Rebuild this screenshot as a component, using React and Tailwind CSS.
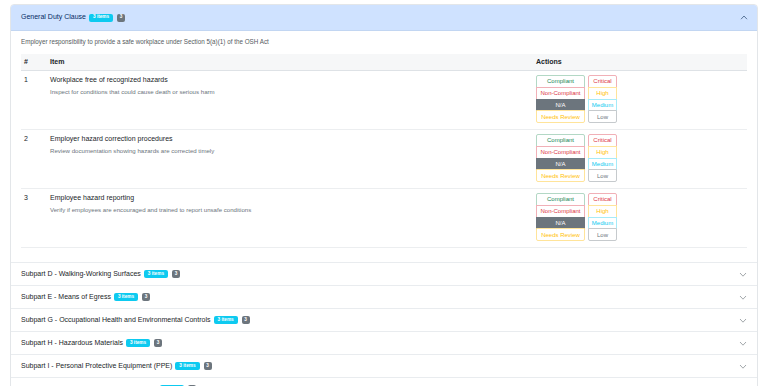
import React from 'react';

const items = [
  {
    n: 1,
    title: 'Workplace free of recognized hazards',
    desc: 'Inspect for conditions that could cause death or serious harm',
  },
  {
    n: 2,
    title: 'Employer hazard correction procedures',
    desc: 'Review documentation showing hazards are corrected timely',
  },
  {
    n: 3,
    title: 'Employee hazard reporting',
    desc: 'Verify if employees are encouraged and trained to report unsafe conditions',
  },
];

const sections = [
  'Subpart D - Walking-Working Surfaces',
  'Subpart E - Means of Egress',
  'Subpart G - Occupational Health and Environmental Controls',
  'Subpart H - Hazardous Materials',
  'Subpart I - Personal Protective Equipment (PPE)',
  'Subpart J - General Environmental Controls',
];

const status = [
  { label: 'Compliant', cls: 'text-[#198754] border-[#b3d8c5] bg-white' },
  { label: 'Non-Compliant', cls: 'text-[#dc3545] border-[#f1b0b7] bg-white' },
  { label: 'N/A', cls: 'text-white border-[#6c757d] bg-[#6c757d]' },
  { label: 'Needs Review', cls: 'text-[#ffc107] border-[#ffe49a] bg-white' },
];

const severity = [
  { label: 'Critical', cls: 'text-[#dc3545] border-[#f1b0b7] bg-white' },
  { label: 'High', cls: 'text-[#ffc107] border-[#ffe49a] bg-white' },
  { label: 'Medium', cls: 'text-[#0dcaf0] border-[#a6ebf9] bg-white' },
  { label: 'Low', cls: 'text-[#6c757d] border-[#c6cacd] bg-white' },
];

function Badges() {
  return (
    <span className="flex items-center gap-[4px] ml-[3px]">
      <span className="h-[8px] px-[4px] rounded-[2px] bg-[#0dcaf0] text-white text-[4.7px] font-bold flex items-center leading-none">
        3 items
      </span>
      <span className="h-[8px] w-[8px] rounded-[2px] bg-[#6c757d] text-white text-[4.7px] font-bold flex items-center justify-center leading-none">
        3
      </span>
    </span>
  );
}

function Chevron({ up }) {
  return (
    <svg width="8" height="5" viewBox="0 0 8 5" fill="none">
      <path
        d={up ? 'M1 4.2 L4 1 L7 4.2' : 'M1 1 L4 4.2 L7 1'}
        stroke={up ? '#3d5a80' : '#8a9096'}
        strokeWidth="0.8"
      />
    </svg>
  );
}

function ButtonGroup({ options, width }) {
  return (
    <div className={`flex flex-col ${width}`}>
      {options.map((o, i) => (
        <div
          key={o.label}
          className={`h-[12.75px] border flex items-center justify-center text-[6px] leading-none ${o.cls} ${
            i > 0 ? '-mt-px' : ''
          } ${i === 0 ? 'rounded-t-[2px]' : ''} ${i === options.length - 1 ? 'rounded-b-[2px]' : ''}`}
        >
          {o.label}
        </div>
      ))}
    </div>
  );
}

export default function App() {
  return (
    <div className="min-h-screen bg-white pt-[4px] pl-[10px] pr-[10px] font-['Liberation_Sans',Arial,sans-serif] text-[#212529]">
      <div className="border border-[#e3e6e9] rounded-t-[4px] overflow-hidden">
        <div className="h-[26px] bg-[#cfe2ff] text-[#052c65] px-[10px] flex items-center justify-between text-[7px] border-b border-[#c2d6f2]">
          <div className="flex items-center">
            <span>General Duty Clause</span>
            <Badges />
          </div>
          <span className="mr-[-1px]">
            <Chevron up />
          </span>
        </div>

        <div className="px-[10px] pt-[6px] pb-[14px]">
          <p className="text-[6.3px] leading-[9px] text-[#555b61]">
            Employer responsibility to provide a safe workplace under Section 5(a)(1) of the OSH Act
          </p>
          <div className="mt-[8px]">
            <div className="grid grid-cols-[26px_1fr_214px] h-[17px] items-center bg-[#f6f7f8] border-b border-[#dee2e6] text-[7px] font-bold">
              <span className="pl-[3px]">#</span>
              <span className="pl-[3px]">Item</span>
              <span className="pl-[3px]">Actions</span>
            </div>
            {items.map((it) => (
              <div
                key={it.n}
                className="grid grid-cols-[26px_1fr_214px] h-[59px] border-b border-[#eceef0] pt-[4px]"
              >
                <span className="pl-[3px] text-[7px] leading-[10px]">{it.n}</span>
                <div className="pl-[3px]">
                  <div className="text-[7px] leading-[10px] text-[#212529]">{it.title}</div>
                  <div className="text-[6.1px] leading-[8px] mt-[3px] text-[#6c757d]">{it.desc}</div>
                </div>
                <div className="pl-[3px] flex gap-[3px] items-start">
                  <ButtonGroup options={status} width="w-[49px]" />
                  <ButtonGroup options={severity} width="w-[29px]" />
                </div>
              </div>
            ))}
          </div>
        </div>

        {sections.map((s) => (
          <div
            key={s}
            className="h-[23px] border-t border-[#e9ecef] px-[10px] flex items-center justify-between text-[7px]"
          >
            <div className="flex items-center">
              <span>{s}</span>
              <Badges />
            </div>
            <Chevron />
          </div>
        ))}
      </div>
    </div>
  );
}
